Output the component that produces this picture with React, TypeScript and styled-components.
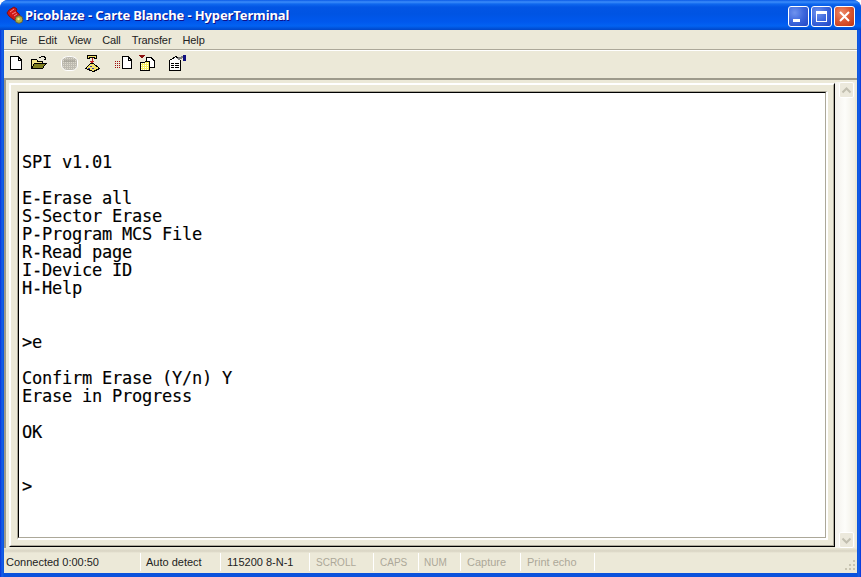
import React from 'react';
import styled, { createGlobalStyle } from 'styled-components';

const GlobalStyle = createGlobalStyle`
  html, body {
    margin: 0;
    padding: 0;
    background: #ffffff;
    overflow: hidden;
  }
`;

const Window = styled.div`
  width: 861px;
  height: 577px;
  display: flex;
  flex-direction: column;
  font-family: "Liberation Sans", "Noto Sans", sans-serif;
  color: #222222;
  border-radius: 8px 8px 0 0;
  overflow: hidden;
  background: linear-gradient(90deg, #0831d9 0, #1661e8 2px, #0a52dc 4px, #0a52dc 857px, #1661e8 859px, #0831d9 100%);
`;

const TitleBar = styled.div`
  height: 30px;
  flex: none;
  display: flex;
  align-items: center;
  padding: 0 6px 0 6px;
  background: linear-gradient(
    180deg,
    #0a5ae6 0,
    #3c8dfa 2px,
    #0f68ee 4px,
    #0255e4 7px,
    #0054e3 14px,
    #0058ee 22px,
    #0262f2 26px,
    #0046c8 30px
  );
`;

const TitleText = styled.div`
  flex: 1;
  font-family: "Noto Sans", "Liberation Sans", sans-serif;
  font-weight: 700;
  font-size: 13px;
  letter-spacing: -0.12px;
  color: #ffffff;
  text-shadow: 1px 1px 0 #0f1089;
  white-space: nowrap;
`;

const CaptionButtons = styled.div`
  display: flex;
  gap: 2px;
  margin-top: 2px;
`;

const CaptionButton = styled.div<{ $close?: boolean }>`
  width: 21px;
  height: 21px;
  box-sizing: border-box;
  border: 1px solid #ffffff;
  border-radius: 3px;
  display: flex;
  align-items: center;
  justify-content: center;
  background: ${(p) =>
    p.$close
      ? 'radial-gradient(circle at 35% 30%, #ee8c6a 0, #dc5a35 45%, #c1330f 100%)'
      : 'radial-gradient(circle at 30% 30%, #6f93ee 0, #3c66dc 50%, #2146c4 100%)'};
`;

const Body = styled.div`
  flex: 1;
  min-height: 0;
  margin: 0 4px 4px;
  display: flex;
  flex-direction: column;
  background: #ece9d8;
`;

const MenuBar = styled.div`
  height: 20px;
  flex: none;
  display: flex;
  align-items: center;
  gap: 11px;
  padding-left: 6px;
  font-size: 11px;
  letter-spacing: -0.1px;
  box-sizing: border-box;
  border-bottom: 1px solid #aca899;
`;

const ToolBar = styled.div`
  height: 28px;
  flex: none;
  display: flex;
  align-items: center;
  box-sizing: border-box;
  border-top: 1px solid #ffffff;
  padding-bottom: 3px;
`;

const ToolSlot = styled.div`
  width: 23px;
  height: 22px;
  display: flex;
  align-items: center;
  justify-content: center;
`;

const ToolSeparator = styled.div`
  width: 8px;
`;

const ClientArea = styled.div`
  flex: 1;
  min-height: 0;
  display: flex;
  box-sizing: border-box;
  border-top: 2px solid #9d9a8b;
  border-left: 2px solid #9d9a8b;
  padding: 3px 1px 0 3px;
`;

const RaisedFrame = styled.div`
  flex: 1;
  min-width: 0;
  box-sizing: border-box;
  border: 1px solid;
  border-color: #ffffff #000000 #000000 #ffffff;
  display: flex;
  margin-bottom: 1px;
`;

const RaisedInner = styled.div`
  flex: 1;
  min-width: 0;
  box-sizing: border-box;
  border: 1px solid;
  border-color: #ffffff #aca899 #aca899 #ffffff;
  padding: 6px 5px 5px 6px;
  display: flex;
`;

const SunkenFrame = styled.div`
  flex: 1;
  min-width: 0;
  box-sizing: border-box;
  border-style: solid;
  border-width: 1px 2px 2px 1px;
  border-color: #aca899 #ffffff #ffffff #aca899;
  display: flex;
`;

const Terminal = styled.pre`
  flex: 1;
  min-width: 0;
  margin: 0;
  box-sizing: border-box;
  background: #ffffff;
  border: 1px solid;
  border-color: #000000 #aca899 #aca899 #000000;
  padding: 6px 0 0 3px;
  font-family: "DejaVu Sans Mono", "Liberation Mono", monospace;
  font-size: 17px;
  letter-spacing: -0.23px;
  line-height: 18px;
  color: #000000;
  -webkit-text-stroke: 0.15px #000000;
  overflow: hidden;
`;

const ScrollBar = styled.div`
  width: 20px;
  flex: none;
  margin: -1px 1px 0 0;
  padding-right: 1px;
  box-sizing: border-box;
  display: flex;
  flex-direction: column;
  align-items: flex-end;
  justify-content: space-between;
  background: linear-gradient(90deg, #f3f1ec 0, #fdfdfa 50%, #f1efe6 100%);
`;

const ScrollButton = styled.div`
  width: 15px;
  height: 16px;
  box-sizing: border-box;
  border: 1px solid #ffffff;
  border-radius: 2px;
  background: #ece9dc;
  display: flex;
  align-items: center;
  justify-content: center;
`;

const StatusBar = styled.div`
  height: 25px;
  flex: none;
  display: flex;
  align-items: flex-start;
  padding-top: 5px;
  box-sizing: border-box;
  background: linear-gradient(180deg, #ece9d8 0, #d8d4c3 3px, #ece9d8 5px);
  position: relative;
  font-size: 11px;
`;

const StatusCell = styled.div<{ $width: number; $pad: number; $off?: boolean; $caps?: boolean }>`
  width: ${(p) => p.$width}px;
  height: 18px;
  flex: none;
  box-sizing: border-box;
  padding-left: ${(p) => p.$pad}px;
  border-right: 1px solid #ffffff;
  font-size: ${(p) => (p.$caps ? '10px' : '11px')};
  line-height: 19px;
  white-space: nowrap;
  color: ${(p) => (p.$off ? '#aca899' : '#222222')};
`;

const Grip = styled.svg`
  position: absolute;
  right: 1px;
  bottom: 2px;
`;

const PhoneIcon = () => (
  <svg width="19" height="19" viewBox="0 0 19 19">
    <path d="M1 7 L3 4 L8 1 L11 3 L10 5 L13 8 L14 10 L11 14 L8 14 L3 10 Z" fill="#d01818" stroke="#8a0c0c" strokeWidth="1" />
    <path d="M4 6 L8 3 M6 8 L10 6 M8 10 L11 8" stroke="#f48a8a" strokeWidth="1" />
    <circle cx="13" cy="13.5" r="3.8" fill="#b4b040" stroke="#5c5c40" />
    <circle cx="12.5" cy="13" r="1.2" fill="#f0ee80" />
  </svg>
);

const NewIcon = () => (
  <svg width="16" height="16" viewBox="0 0 16 16" shapeRendering="crispEdges">
    <path d="M2.5 1.5 H10 L13.5 5 V14.5 H2.5 Z" fill="#ffffff" stroke="#000000" />
    <path d="M10 1.5 V5 H13.5" fill="none" stroke="#000000" />
  </svg>
);

const OpenIcon = () => (
  <svg width="17" height="16" viewBox="0 0 17 16" shapeRendering="crispEdges">
    <path d="M1.5 4.5 H6.5 L7.5 6 H12.5 V13.5 H1.5 Z" fill="#f3e58a" stroke="#000000" />
    <path d="M1.5 13.5 L4.5 8.5 H16 L12.5 13.5 Z" fill="#7f7f20" stroke="#000000" />
    <path d="M9 3 L12 1.5 H14 L15.5 4 M15.5 4 L13.5 4 M15.5 4 V2" fill="none" stroke="#000000" />
  </svg>
);

const CallIcon = () => (
  <svg width="17" height="15" viewBox="0 0 17 15">
    <defs>
      <pattern id="callDither" width="2" height="2" patternUnits="userSpaceOnUse">
        <rect width="2" height="2" fill="#bdbab0" />
        <rect width="1" height="1" fill="#dcd9cc" />
      </pattern>
    </defs>
    <path d="M0.5 5 C1 2 4 0.5 8.5 0.5 C13 0.5 16 2 16.5 5 V9 C16.5 12 14 14.5 11 14.5 H6 C3 14.5 0.5 12 0.5 9 Z" fill="url(#callDither)" stroke="#ffffff" strokeWidth="1" />
    <path d="M3 5 H14" stroke="#9a978c" strokeWidth="1" />
  </svg>
);

const HangupIcon = () => (
  <svg width="15" height="18" viewBox="0 0 15 18" shapeRendering="crispEdges">
    <path d="M2.5 1.5 H11.5 V4.5 H9.5 V3.5 H4.5 V4.5 H2.5 Z" fill="#f4e26a" stroke="#000000" />
    <path d="M7 4 V10 M5 7 H9 M6 8 H8" stroke="#c02020" />
    <path d="M5.5 9.5 H8.5 L14.5 14.5 L8.5 17.5 L0.5 14.5 Z" fill="#f4e26a" stroke="#000000" />
    <path d="M3 14 H5 M7 14 H9 M5 12 H7" stroke="#3a3ab0" />
  </svg>
);

const SendIcon = () => (
  <svg width="17" height="16" viewBox="0 0 17 16" shapeRendering="crispEdges">
    <path d="M0 6h1v1H0z M2 6h1v1H2z M4 6h1v1H4z M0 8h1v1H0z M2 8h1v1H2z M4 8h1v1H4z M0 10h1v1H0z M2 10h1v1H2z M4 10h1v1H4z M0 12h1v1H0z M2 12h1v1H2z M4 12h1v1H4z" fill="#a01010" />
    <path d="M7.5 1.5 H13 L16.5 5 V13.5 H7.5 Z" fill="#ffffff" stroke="#000000" />
    <path d="M13 1.5 V5 H16.5" fill="none" stroke="#000000" />
  </svg>
);

const ReceiveIcon = () => (
  <svg width="16" height="16" viewBox="0 0 16 16" shapeRendering="crispEdges">
    <defs>
      <pattern id="folderDither" width="2" height="2" patternUnits="userSpaceOnUse">
        <rect width="2" height="2" fill="#f8f060" />
        <rect width="1" height="1" fill="#ffffff" />
      </pattern>
    </defs>
    <path d="M0 0 H6 V1 H5 V2 H4 V3 H2 V2 H1 V1 H0 Z" fill="#8a1010" />
    <path d="M7.5 2.5 H12 L15.5 6 V12.5 H7.5 Z" fill="#ffffff" stroke="#000000" />
    <path d="M1.5 7.5 H5 L6.5 6.5 H10.5 V15 H1.5 Z" fill="url(#folderDither)" stroke="#000000" />
  </svg>
);

const PropertiesIcon = () => (
  <svg width="17" height="16" viewBox="0 0 17 16" shapeRendering="crispEdges">
    <path d="M0.5 5.5 L7 1.5 L11.5 5.5 V15.5 H0.5 Z" fill="#ffffff" stroke="#000000" />
    <path d="M2 8.5 H5 M6 8.5 H10 M2 10.5 H5 M6 10.5 H10 M2 12.5 H5 M6 12.5 H10" stroke="#000000" />
    <path d="M7 3 L14 1 L14 3 L10 5 Z" fill="#808080" />
    <rect x="14" y="0" width="3" height="6" fill="#101080" />
  </svg>
);

const terminalText = `


SPI v1.01

E-Erase all
S-Sector Erase
P-Program MCS File
R-Read page
I-Device ID
H-Help


>e

Confirm Erase (Y/n) Y
Erase in Progress

OK


>`;

const statusCells = [
  { text: 'Connected 0:00:50', width: 137, pad: 2 },
  { text: 'Auto detect', width: 80, pad: 5 },
  { text: '115200 8-N-1', width: 89, pad: 6 },
  { text: 'SCROLL', width: 64, pad: 6, off: true, caps: true },
  { text: 'CAPS', width: 45, pad: 6, off: true, caps: true },
  { text: 'NUM', width: 42, pad: 5, off: true, caps: true },
  { text: 'Capture', width: 60, pad: 6, off: true },
  { text: 'Print echo', width: 74, pad: 6, off: true },
];

const menus = ['File', 'Edit', 'View', 'Call', 'Transfer', 'Help'];

export default function App() {
  return (
    <>
      <GlobalStyle />
      <Window>
        <TitleBar>
          <PhoneIcon />
          <TitleText>Picoblaze - Carte Blanche - HyperTerminal</TitleText>
          <CaptionButtons>
            <CaptionButton>
              <svg width="19" height="19" viewBox="0 0 19 19" shapeRendering="crispEdges">
                <rect x="4" y="12" width="7" height="3" fill="#ffffff" />
              </svg>
            </CaptionButton>
            <CaptionButton>
              <svg width="19" height="19" viewBox="0 0 19 19" shapeRendering="crispEdges">
                <rect x="4.5" y="4.5" width="10" height="10" fill="none" stroke="#ffffff" />
                <rect x="4" y="4" width="11" height="3" fill="#ffffff" />
              </svg>
            </CaptionButton>
            <CaptionButton $close>
              <svg width="19" height="19" viewBox="0 0 19 19">
                <path d="M5 5 L14 14 M14 5 L5 14" stroke="#ffffff" strokeWidth="2" />
              </svg>
            </CaptionButton>
          </CaptionButtons>
        </TitleBar>
        <Body>
          <MenuBar>
            {menus.map((m) => (
              <span key={m}>{m}</span>
            ))}
          </MenuBar>
          <ToolBar>
            <ToolSlot><NewIcon /></ToolSlot>
            <ToolSlot><OpenIcon /></ToolSlot>
            <ToolSeparator />
            <ToolSlot><CallIcon /></ToolSlot>
            <ToolSlot><HangupIcon /></ToolSlot>
            <ToolSeparator />
            <ToolSlot><SendIcon /></ToolSlot>
            <ToolSlot><ReceiveIcon /></ToolSlot>
            <ToolSeparator />
            <ToolSlot><PropertiesIcon /></ToolSlot>
          </ToolBar>
          <ClientArea>
            <RaisedFrame>
              <RaisedInner>
                <SunkenFrame>
                  <Terminal>{terminalText}</Terminal>
                </SunkenFrame>
              </RaisedInner>
            </RaisedFrame>
            <ScrollBar>
              <ScrollButton>
                <svg width="11" height="9" viewBox="0 0 11 9">
                  <path d="M1.5 6.5 L5.5 2.5 L9.5 6.5" fill="none" stroke="#c2bfb0" strokeWidth="2" />
                </svg>
              </ScrollButton>
              <ScrollButton>
                <svg width="11" height="9" viewBox="0 0 11 9">
                  <path d="M1.5 2.5 L5.5 6.5 L9.5 2.5" fill="none" stroke="#c2bfb0" strokeWidth="2" />
                </svg>
              </ScrollButton>
            </ScrollBar>
          </ClientArea>
          <StatusBar>
            {statusCells.map((c) => (
              <StatusCell key={c.text} $width={c.width} $pad={c.pad} $off={c.off} $caps={c.caps}>
                {c.text}
              </StatusCell>
            ))}
            <Grip width="12" height="12" viewBox="0 0 12 12" shapeRendering="crispEdges">
              <path d="M9 1h2v2H9z M9 5h2v2H9z M5 5h2v2H5z M9 9h2v2H9z M5 9h2v2H5z M1 9h2v2H1z" fill="#c9c5b2" />
            </Grip>
          </StatusBar>
        </Body>
      </Window>
    </>
  );
}
